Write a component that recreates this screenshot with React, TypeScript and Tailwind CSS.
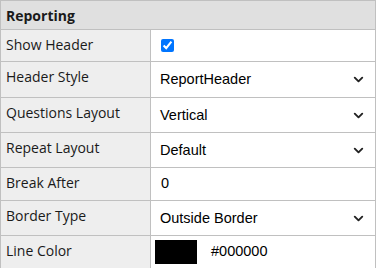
import { ChevronDown } from 'lucide-react';

type Row = {
    label: string;
    h: string;
    kind: 'check' | 'select' | 'text' | 'color';
    value?: string;
};

const rows: Row[] = [
    { label: 'Show Header', h: 'h-[32px]', kind: 'check' },
    { label: 'Header Style', h: 'h-[36px]', kind: 'select', value: 'ReportHeader' },
    { label: 'Questions Layout', h: 'h-[35px]', kind: 'select', value: 'Vertical' },
    { label: 'Repeat Layout', h: 'h-[35px]', kind: 'select', value: 'Default' },
    { label: 'Break After', h: 'h-[33px]', kind: 'text', value: '0' },
    { label: 'Border Type', h: 'h-[35px]', kind: 'select', value: 'Outside Border' },
    { label: 'Line Color', h: 'h-[32px]', kind: 'color', value: '#000000' },
];

function ValueCell({ row }: { row: Row }) {
    if (row.kind === 'check') {
        return (
            <div className="flex items-center h-full px-[10px]">
                <input
                    type="checkbox"
                    defaultChecked
                    className="w-[13px] h-[13px] m-0 accent-[#0075ff]"
                />
            </div>
        );
    }
    if (row.kind === 'select') {
        return (
            <div className="flex items-center justify-between h-full pl-[9px] pr-[9px] font-['Liberation_Sans',Arial,sans-serif] text-[14.5px] text-black">
                <span className="pt-[1px]">{row.value}</span>
                <ChevronDown size={15} strokeWidth={3} className="text-[#222]" />
            </div>
        );
    }
    if (row.kind === 'text') {
        return (
            <div className="flex items-center h-full pl-[10px] font-['Liberation_Sans',Arial,sans-serif] text-[14.5px] text-black">
                {row.value}
            </div>
        );
    }
    return (
        <div className="flex items-center h-full pl-[4px] gap-[14px] font-['Liberation_Sans',Arial,sans-serif] text-[14.5px] text-black">
            <div className="w-[42px] h-[24px] bg-black" />
            <span>{row.value}</span>
        </div>
    );
}

export default function App() {
    return (
        <div className="w-[376px] h-[268px] bg-white font-['Open_Sans','Noto_Sans',sans-serif] text-[#1a1a1a]">
            <div className="border border-[#c0c0c0]">
                <div className="h-[29px] bg-[#e0e0e0] border-b border-[#c0c0c0] flex items-center px-[5px] font-bold text-[14px]">
                    Reporting
                </div>
                {rows.map((row, idx) => (
                    <div
                        key={row.label}
                        className={`${row.h} grid grid-cols-[150px_1fr] ${
                            idx < rows.length - 1 ? 'border-b' : ''
                        } border-[#c0c0c0]`}
                    >
                        <div className="bg-[#eeeeee] border-r border-[#c0c0c0] px-[5px] pt-[5px] text-[14px] leading-[20px]">
                            {row.label}
                        </div>
                        <ValueCell row={row} />
                    </div>
                ))}
            </div>
        </div>
    );
}
